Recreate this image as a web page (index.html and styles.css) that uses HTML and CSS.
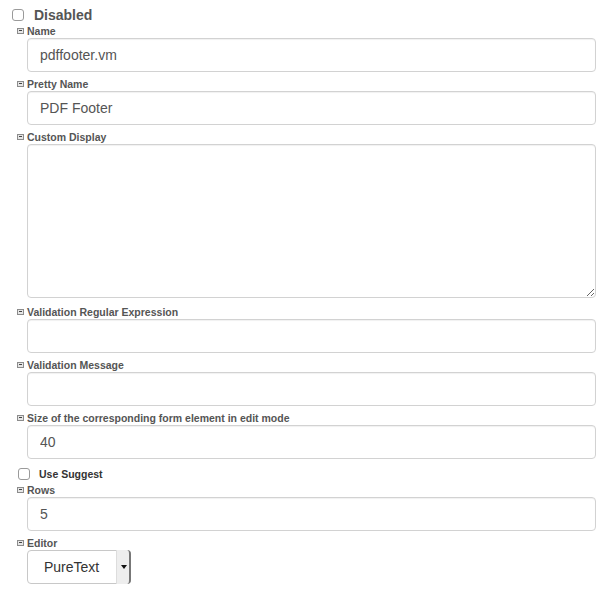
FILE: index.html
```html
<!DOCTYPE html>
<html lang="en">
<head>
  <meta charset="UTF-8" />
  <title>Class property</title>
  <link rel="stylesheet" href="styles.css">
</head>
<body>
  <form class="prop-form">
    <label class="check check-top"><input type="checkbox"> Disabled</label>

    <div class="field">
      <div class="field-label"><span class="toggle"></span>Name</div>
      <input class="form-control" type="text" value="pdffooter.vm">
    </div>

    <div class="field">
      <div class="field-label"><span class="toggle"></span>Pretty Name</div>
      <input class="form-control" type="text" value="PDF Footer">
    </div>

    <div class="field">
      <div class="field-label"><span class="toggle"></span>Custom Display</div>
      <textarea class="form-control area"></textarea>
    </div>

    <div class="field">
      <div class="field-label"><span class="toggle"></span>Validation Regular Expression</div>
      <input class="form-control" type="text" value="">
    </div>

    <div class="field">
      <div class="field-label"><span class="toggle"></span>Validation Message</div>
      <input class="form-control" type="text" value="">
    </div>

    <div class="field">
      <div class="field-label"><span class="toggle"></span>Size of the corresponding form element in edit mode</div>
      <input class="form-control" type="text" value="40">
    </div>

    <label class="check check-inner"><input type="checkbox"> Use Suggest</label>

    <div class="field">
      <div class="field-label"><span class="toggle"></span>Rows</div>
      <input class="form-control" type="text" value="5">
    </div>

    <div class="field">
      <div class="field-label"><span class="toggle"></span>Editor</div>
      <span class="select-wrap">
        <select class="select">
          <option>PureText</option>
          <option>Text</option>
          <option>Wysiwyg</option>
        </select>
        <span class="select-arrow"></span>
      </span>
    </div>
  </form>
</body>
</html>
```

FILE: styles.css
```css
* { box-sizing: border-box; }
body { margin: 0; background: #fff; font-family: "Liberation Sans", Arial, Helvetica, sans-serif; }

.prop-form { padding: 5px 16px 0 0; }

/* checkboxes */
.check { display: flex; align-items: center; height: 19px; font-weight: bold; }
.check input {
  appearance: none; -webkit-appearance: none;
  width: 12px; height: 12px; margin: 0;
  border: 1px solid #9a9a9a; border-radius: 3px; background: #fff;
}
.check-top { padding-left: 12px; font-size: 14px; color: #555; }
.check-top input { margin-right: 10px; }
.check-inner { padding-left: 18px; font-size: 10.5px; color: #333; }
.check-inner input { margin-right: 9px; }

/* labels */
.field-label { display: flex; align-items: center; height: 14px; padding-left: 17px; font-size: 10.5px; font-weight: bold; color: #555; }
.toggle { position: relative; width: 7px; height: 6px; margin-right: 3px; border: 1px solid #8c8c8c; background: #e6e6e6; }
.toggle::after { content: ''; position: absolute; left: 1px; right: 1px; top: 1px; height: 1px; background: #444; }

/* inputs */
.form-control {
  display: block; width: calc(100% - 27px); height: 34px; margin: 0 0 5px 27px;
  padding: 6px 12px; font-family: inherit; font-size: 14px; color: #555;
  border: 1px solid #d2d2d2; border-radius: 4px; background: #fff;
  box-shadow: inset 0 1px 1px rgba(0,0,0,.06);
}
.area { height: 154px; margin-bottom: 7px; resize: both; }

/* select */
.select-wrap { position: relative; display: inline-block; margin-left: 27px; }
.select {
  appearance: none; -webkit-appearance: none;
  width: 104px; height: 34px; padding: 0 0 0 16px;
  font-family: inherit; font-size: 14px; color: #333;
  border: 1px solid #c8c8c8; border-radius: 4px; background: #fff;
}
.select-arrow {
  position: absolute; top: 0; right: 0; bottom: 0; width: 15px;
  background: #eee; border-left: 1px solid #ddd; border-right: 2px solid #777;
  border-radius: 0 4px 4px 0; pointer-events: none;
}
.select-arrow::after {
  content: ''; position: absolute; left: 4px; top: 15px;
  border-left: 3px solid transparent; border-right: 3px solid transparent; border-top: 4px solid #111;
}
```
